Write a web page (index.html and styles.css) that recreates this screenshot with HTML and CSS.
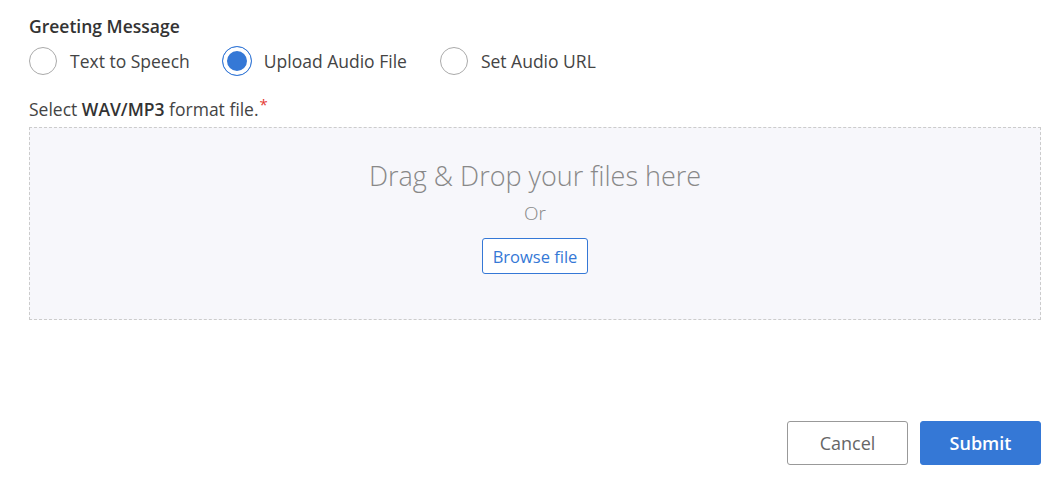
FILE: index.html
```html
<!DOCTYPE html>
<html>
<head>
<meta charset="utf-8">
<link rel="stylesheet" href="styles.css">
</head>
<body>
<div class="page">
  <div class="section-title">Greeting Message</div>
  <div class="radios">
    <label class="radio"><span class="circle"></span><span>Text to Speech</span></label>
    <label class="radio"><span class="circle checked"></span><span>Upload Audio File</span></label>
    <label class="radio"><span class="circle"></span><span>Set Audio URL</span></label>
  </div>
  <div class="field-label">Select <b>WAV/MP3</b> format file.<span class="req">*</span></div>
  <div class="dropzone">
    <div class="dz-title">Drag &amp; Drop your files here</div>
    <div class="dz-or">Or</div>
    <button class="browse">Browse file</button>
  </div>
  <div class="actions">
    <button class="btn cancel">Cancel</button>
    <button class="btn submit">Submit</button>
  </div>
</div>
</body>
</html>
```

FILE: styles.css
```css
* { box-sizing: border-box; }
html, body { margin: 0; background: #fff; }
body { font-family: "Open Sans", "Noto Sans", sans-serif; color: #333; }
.page { padding: 14px 19px 0 29px; width: 1060px; }
.section-title { font-size: 17.5px; font-weight: 600; color: #333; line-height: 24px; }
.radios { display: flex; align-items: center; margin-top: 8px; height: 30px; }
.radio { display: flex; align-items: center; font-size: 17.5px; color: #444; margin-right: 33px; }
.circle { width: 28px; height: 28px; border: 1px solid #aaa; border-radius: 50%; margin-right: 13px; background: #fff; }
.circle.checked { border-color: #3578d6; box-shadow: inset 0 0 0 4px #fff; background: #3578d6; width: 30px; height: 30px; margin-left: -1px; margin-right: 12px; }
.field-label { margin-top: 16px; font-size: 17.5px; color: #444; line-height: 24px; }
.field-label b { font-weight: 600; color: #333; }
.req { color: #e53935; font-size: 15px; vertical-align: 6px; margin-left: 1px; }
.dropzone { margin-top: 6px; height: 193px; border: 1px dashed #ccc; background: #f7f7fb; display: flex; flex-direction: column; align-items: center; padding-top: 29px; }
.dz-title { font-size: 27px; font-weight: 300; color: #888; line-height: 38px; }
.dz-or { font-size: 19px; font-weight: 300; color: #888; margin-top: 5px; line-height: 26px; }
.browse { margin-top: 12px; height: 36px; padding: 0 10px; background: #fff; border: 1px solid #3578d6; border-radius: 3px; color: #3578d6; font-family: inherit; font-size: 16.5px; }
.actions { display: flex; justify-content: flex-end; gap: 12px; margin-top: 101px; }
.btn { width: 121px; height: 44px; border-radius: 3px; font-family: inherit; font-size: 18px; }
.cancel { background: #fff; border: 1px solid #999; color: #666; }
.submit { background: #3578d6; border: 1px solid #3578d6; color: #fff; font-weight: 600; }
```
